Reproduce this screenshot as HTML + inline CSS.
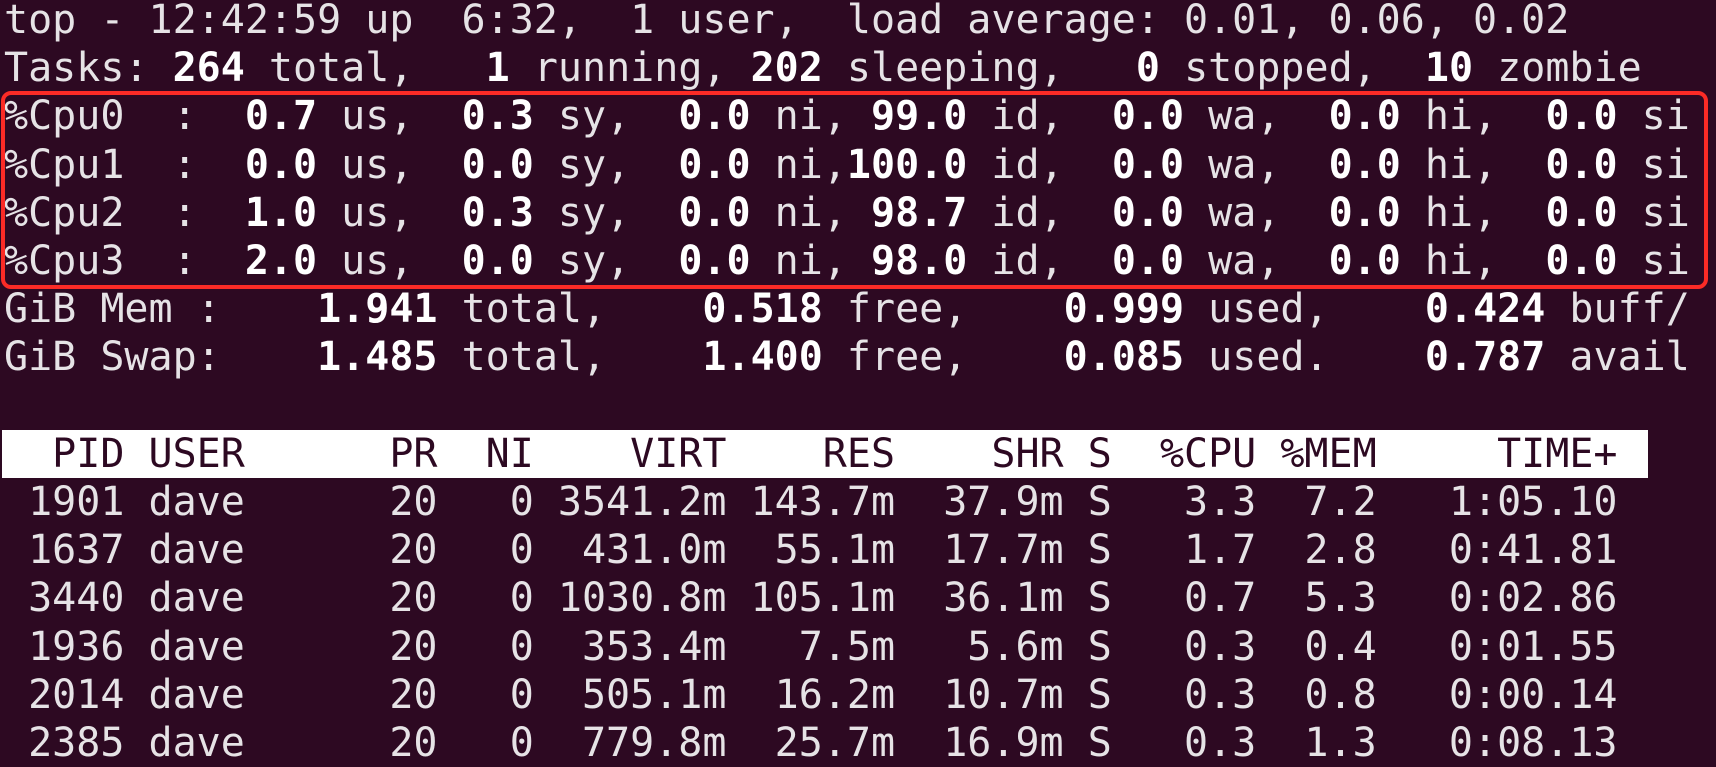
<!DOCTYPE html>
<html><head><meta charset="utf-8"><style>
html,body{margin:0;padding:0;width:1716px;height:746px;overflow:hidden;background:#2d0922;}
pre{position:absolute;left:4px;top:-4px;margin:0;font-family:"DejaVu Sans Mono","Liberation Mono",monospace;font-size:40px;line-height:48.2px;color:#e6e3e6;white-space:pre;z-index:2;}
b{color:#ffffff;font-weight:bold;}
.hd{color:#2d0922;}
#box{position:absolute;left:1px;top:91px;width:1699px;height:190px;border:4px solid #fb2b26;border-radius:10px;z-index:3;}
#bar{position:absolute;left:2px;top:430px;width:1646px;height:48px;background:#ffffff;z-index:1;}
</style></head><body>
<div id="bar"></div>
<div id="box"></div>
<pre>top - 12:42:59 up  6:32,  1 user,  load average: 0.01, 0.06, 0.02
Tasks: <b>264</b> total,   <b>1</b> running, <b>202</b> sleeping,   <b>0</b> stopped,  <b>10</b> zombie
%Cpu0  :  <b>0.7</b> us,  <b>0.3</b> sy,  <b>0.0</b> ni, <b>99.0</b> id,  <b>0.0</b> wa,  <b>0.0</b> hi,  <b>0.0</b> si
%Cpu1  :  <b>0.0</b> us,  <b>0.0</b> sy,  <b>0.0</b> ni,<b>100.0</b> id,  <b>0.0</b> wa,  <b>0.0</b> hi,  <b>0.0</b> si
%Cpu2  :  <b>1.0</b> us,  <b>0.3</b> sy,  <b>0.0</b> ni, <b>98.7</b> id,  <b>0.0</b> wa,  <b>0.0</b> hi,  <b>0.0</b> si
%Cpu3  :  <b>2.0</b> us,  <b>0.0</b> sy,  <b>0.0</b> ni, <b>98.0</b> id,  <b>0.0</b> wa,  <b>0.0</b> hi,  <b>0.0</b> si
GiB Mem :    <b>1.941</b> total,    <b>0.518</b> free,    <b>0.999</b> used,    <b>0.424</b> buff/
GiB Swap:    <b>1.485</b> total,    <b>1.400</b> free,    <b>0.085</b> used.    <b>0.787</b> avail

<span class="hd">  PID USER      PR  NI    VIRT    RES    SHR S  %CPU %MEM     TIME+ </span>
 1901 dave      20   0 3541.2m 143.7m  37.9m S   3.3  7.2   1:05.10
 1637 dave      20   0  431.0m  55.1m  17.7m S   1.7  2.8   0:41.81
 3440 dave      20   0 1030.8m 105.1m  36.1m S   0.7  5.3   0:02.86
 1936 dave      20   0  353.4m   7.5m   5.6m S   0.3  0.4   0:01.55
 2014 dave      20   0  505.1m  16.2m  10.7m S   0.3  0.8   0:00.14
 2385 dave      20   0  779.8m  25.7m  16.9m S   0.3  1.3   0:08.13</pre>
</body></html>
